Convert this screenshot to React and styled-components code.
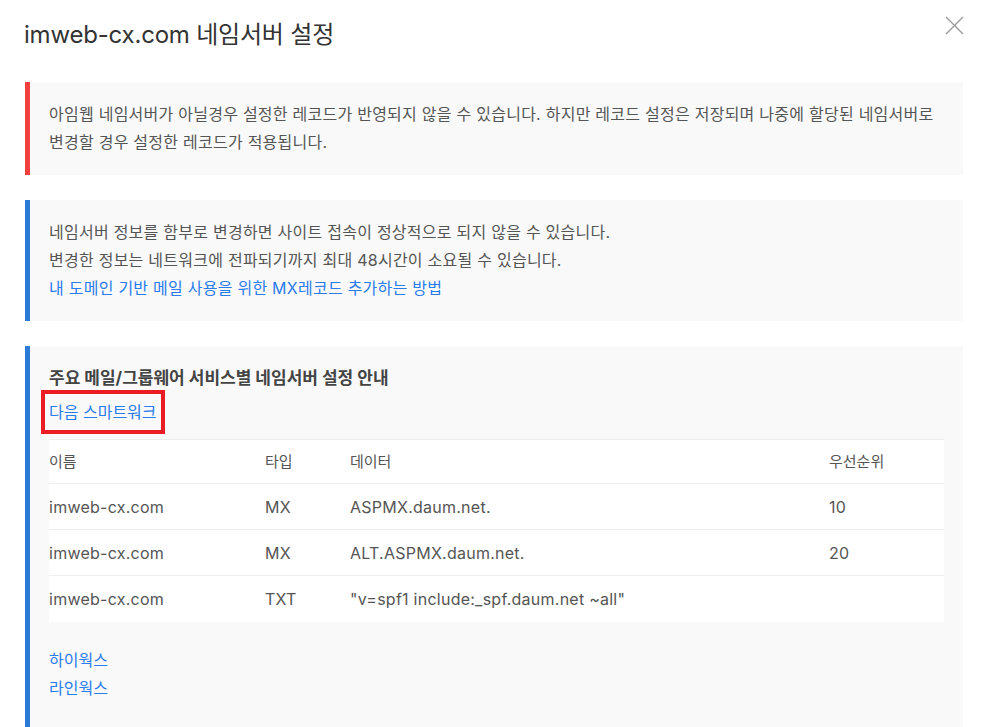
import React from 'react';
import styled, { createGlobalStyle } from 'styled-components';

const Global = createGlobalStyle`
  html, body { margin: 0; padding: 0; background: #fff; }
  body {
    font-family: Inter, "Noto Sans CJK KR", sans-serif;
    -webkit-font-smoothing: antialiased;
  }
  * { box-sizing: border-box; }
`;

const Page = styled.div`
  padding: 0 21px 0 25px;
  height: 727px;
  overflow: hidden;
`;

const Header = styled.header`
  display: flex;
  justify-content: space-between;
  align-items: flex-start;
  height: 82px;
`;

const Title = styled.h1`
  margin: 18px 0 0 -1px;
  font-size: 24px;
  font-weight: 400;
  line-height: 34px;
  color: #333;
  letter-spacing: -0.2px;
`;

const CloseButton = styled.button`
  margin-top: 15px;
  margin-right: -1px;
  width: 20px;
  height: 20px;
  padding: 0;
  border: 0;
  background: none;
  display: flex;
  align-items: center;
  justify-content: center;
  cursor: pointer;
`;

const Notice = styled.section`
  background: #f9f9f9;
  border-left: 5px solid ${p => p.$accent};
  padding: 18px 19px ${p => (p.$tall ? '48px' : '19px')};
  margin-bottom: 25px;
  font-size: 16px;
  line-height: 28px;
  letter-spacing: 0.25px;
  color: #555;
  word-break: keep-all;
`;

const Line = styled.p`
  margin: 0;
`;

const Link = styled.a`
  color: #2a7ced;
  text-decoration: none;
  cursor: pointer;
`;

const GuideTitle = styled.h2`
  margin: 0 0 6px;
  font-size: 17px;
  font-weight: 700;
  line-height: 28px;
  letter-spacing: 0;
  color: #444;
`;

const HighlightLink = styled(Link)`
  display: inline-block;
  line-height: 28px;
  letter-spacing: 0;
  outline: 4px solid #ec1c24;
  outline-offset: 4px;
  margin-bottom: 13px;
`;

const Table = styled.table`
  width: 100%;
  border-collapse: collapse;
  background: #fff;
  table-layout: fixed;
`;

const Th = styled.th`
  height: 44px;
  padding: 0;
  text-align: left;
  font-weight: 400;
  font-size: 15px;
  letter-spacing: 0;
  color: #555;
  border-top: 1px solid #eee;
  width: ${p => p.$w || 'auto'};
`;

const Td = styled.td`
  height: 46px;
  padding: 0;
  font-size: 16px;
  letter-spacing: 0.25px;
  color: #555;
  border-top: 1px solid #eee;
  white-space: nowrap;
`;

const LinkList = styled.div`
  display: flex;
  flex-direction: column;
  align-items: flex-start;
  margin-top: 24px;
  font-size: 16px;
  line-height: 28px;
  letter-spacing: 0;
`;

const records = [
  { name: 'imweb-cx.com', type: 'MX', data: 'ASPMX.daum.net.', prio: '10' },
  { name: 'imweb-cx.com', type: 'MX', data: 'ALT.ASPMX.daum.net.', prio: '20' },
  { name: 'imweb-cx.com', type: 'TXT', data: '"v=spf1 include:_spf.daum.net ~all"', prio: '' },
];

export default function App() {
  return (
    <>
      <Global />
      <Page>
        <Header>
          <Title>imweb-cx.com 네임서버 설정</Title>
          <CloseButton aria-label="닫기">
            <svg width="19" height="19" viewBox="0 0 19 19">
              <path d="M1 1 L18 18 M18 1 L1 18" stroke="#9a9a9a" strokeWidth="1.3" fill="none" />
            </svg>
          </CloseButton>
        </Header>

        <Notice $accent="#f2403f">
          <Line>아임웹 네임서버가 아닐경우 설정한 레코드가 반영되지 않을 수 있습니다. 하지만 레코드 설정은 저장되며 나중에 할당된 네임서버로 변경할 경우 설정한 레코드가 적용됩니다.</Line>
        </Notice>

        <Notice $accent="#2a7ad6">
          <Line>네임서버 정보를 함부로 변경하면 사이트 접속이 정상적으로 되지 않을 수 있습니다.</Line>
          <Line>변경한 정보는 네트워크에 전파되기까지 최대 48시간이 소요될 수 있습니다.</Line>
          <Line><Link>내 도메인 기반 메일 사용을 위한 MX레코드 추가하는 방법</Link></Line>
        </Notice>

        <Notice $accent="#2a7ad6" $tall>
          <GuideTitle>주요 메일/그룹웨어 서비스별 네임서버 설정 안내</GuideTitle>
          <HighlightLink>다음 스마트워크</HighlightLink>
          <Table>
            <thead>
              <tr>
                <Th $w="216px">이름</Th>
                <Th $w="85px">타입</Th>
                <Th $w="479px">데이터</Th>
                <Th>우선순위</Th>
              </tr>
            </thead>
            <tbody>
              {records.map((r, i) => (
                <tr key={i}>
                  <Td>{r.name}</Td>
                  <Td>{r.type}</Td>
                  <Td>{r.data}</Td>
                  <Td>{r.prio}</Td>
                </tr>
              ))}
            </tbody>
          </Table>
          <LinkList>
            <Link>하이웍스</Link>
            <Link>라인웍스</Link>
          </LinkList>
        </Notice>
      </Page>
    </>
  );
}
